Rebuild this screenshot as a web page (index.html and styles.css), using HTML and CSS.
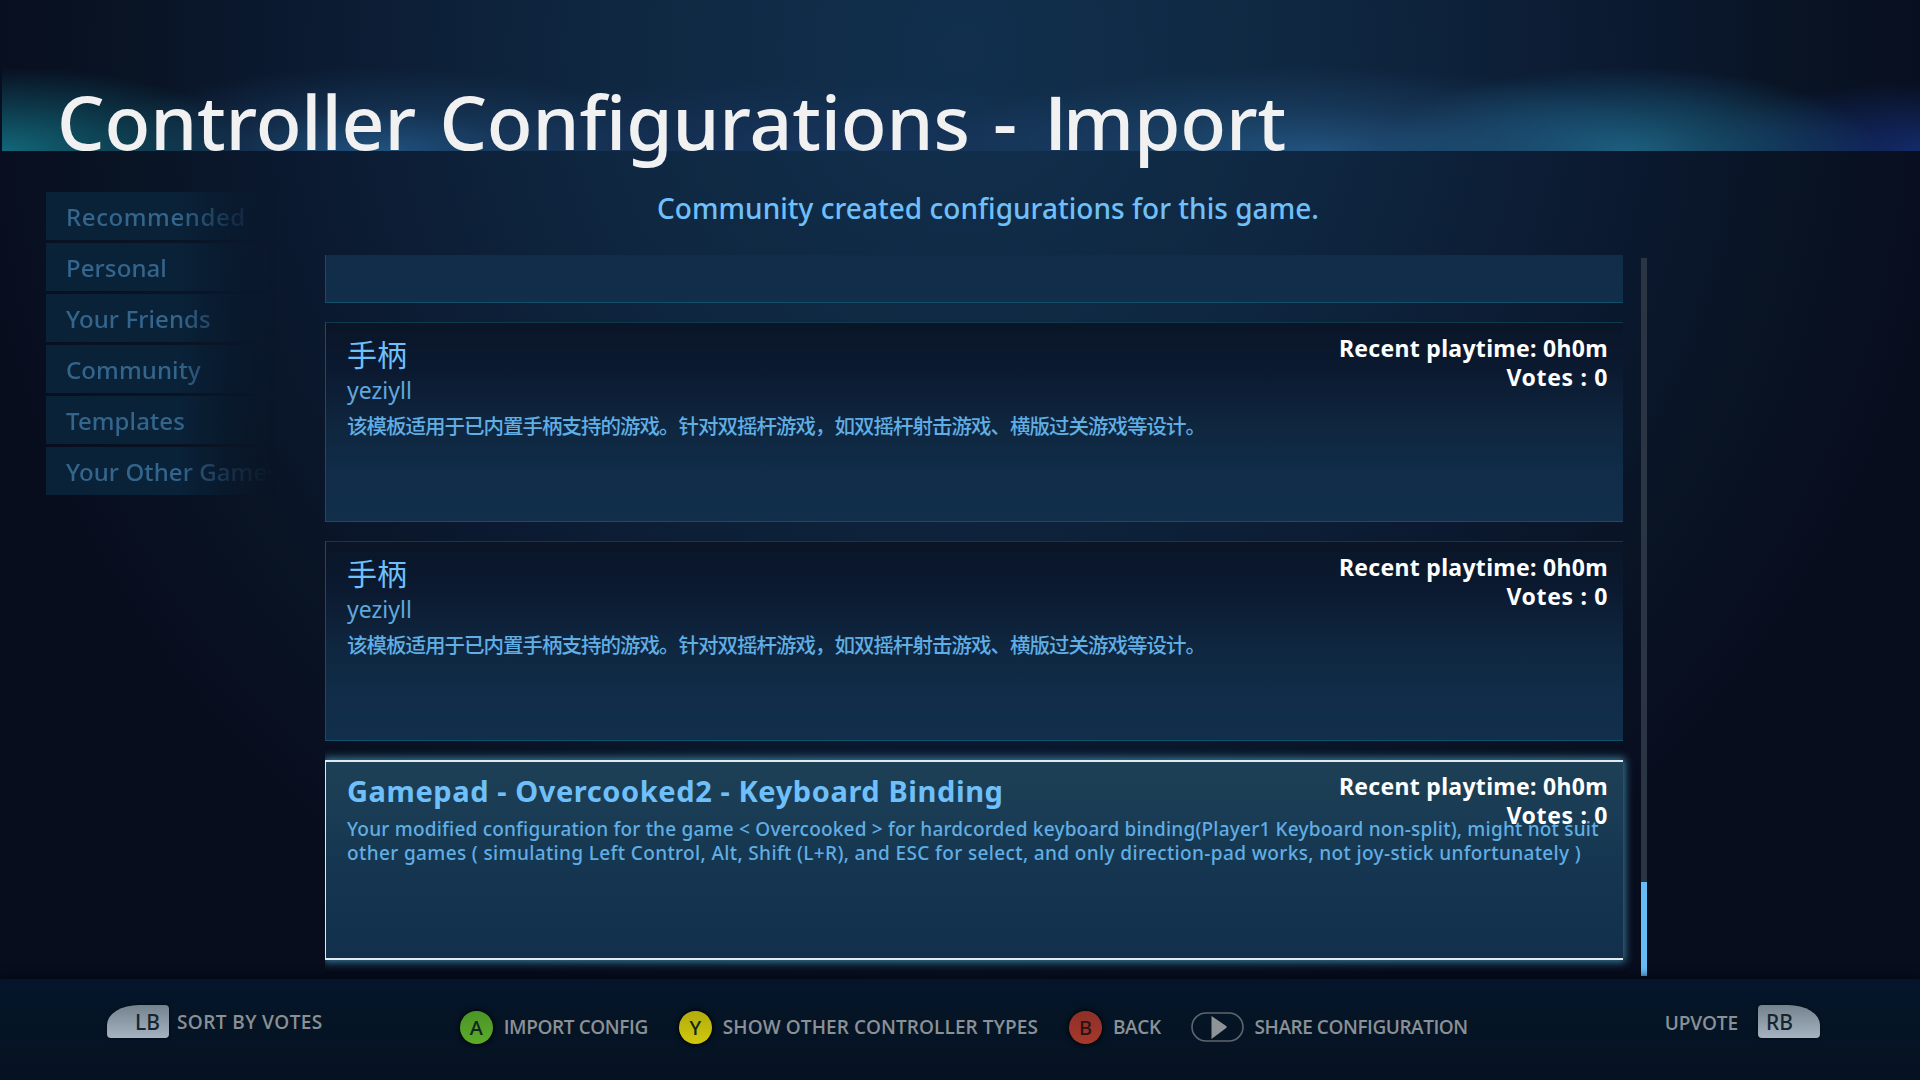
FILE: index.html
```html
<!DOCTYPE html>
<html lang="en">
<head>
  <meta charset="UTF-8">
  <meta name="viewport" content="width=device-width, initial-scale=1.0">
  <title>Controller Configurations - Import</title>
  <link rel="stylesheet" href="styles.css">
</head>
<body>

  <header class="header">
    <h1 class="page-title">Controller Configurations - <span class="plain">I</span>mport</h1>
  </header>

  <main class="main">
    <nav class="tabs">
      <a class="tab tab-wide">Recommended</a>
      <a class="tab">Personal</a>
      <a class="tab">Your Friends</a>
      <a class="tab">Community</a>
      <a class="tab">Templates</a>
      <a class="tab">Your Other Games</a>
    </nav>

    <section class="content">
      <p class="subtitle">Community created configurations for this game.</p>

      <div class="list-row">
        <div class="list">
          <div class="card"></div>

          <div class="card">
            <h2 class="card-title cjk">手柄</h2>
            <div class="author">yeziyll</div>
            <p class="desc cjk">该模板适用于已内置手柄支持的游戏。针对双摇杆游戏，如双摇杆射击游戏、横版过关游戏等设计。</p>
            <div class="stats">
              <div>Recent playtime: 0h0m</div>
              <div class="votes">Votes : 0</div>
            </div>
          </div>

          <div class="card">
            <h2 class="card-title cjk">手柄</h2>
            <div class="author">yeziyll</div>
            <p class="desc cjk">该模板适用于已内置手柄支持的游戏。针对双摇杆游戏，如双摇杆射击游戏、横版过关游戏等设计。</p>
            <div class="stats">
              <div>Recent playtime: 0h0m</div>
              <div class="votes">Votes : 0</div>
            </div>
          </div>

          <div class="card focused">
            <h2 class="card-title">Gamepad - Overcooked2 - Keyboard Binding</h2>
            <p class="desc">Your modified configuration for the game &lt; Overcooked &gt; for hardcorded keyboard binding(Player1 Keyboard non-split), might not suit<br><span class="loose">other games ( simulating Left Control, Alt, Shift (L+R), and ESC for select, and only direction-pad works, not joy-stick unfortunately )</span></p>
            <div class="stats">
              <div>Recent playtime: 0h0m</div>
              <div class="votes">Votes : 0</div>
            </div>
          </div>
        </div>

        <div class="scrollbar"><div class="thumb"></div></div>
      </div>
    </section>
  </main>

  <footer class="footer">
    <div class="hint hint-left">
      <span class="bumper lb">LB</span>
      <span class="label sort">SORT BY VOTES</span>
    </div>

    <div class="hints">
      <div class="hint"><span class="btn btn-a">A</span><span class="label import">IMPORT CONFIG</span></div>
      <div class="hint"><span class="btn btn-y">Y</span><span class="label types">SHOW OTHER CONTROLLER TYPES</span></div>
      <div class="hint"><span class="btn btn-b">B</span><span class="label back">BACK</span></div>
      <div class="hint">
        <svg class="start" width="53" height="31" viewBox="0 0 53 31">
          <rect x="1" y="1" width="51" height="28" rx="14" fill="none" stroke="#5d666e" stroke-width="1.6"/>
          <path d="M20.5 4 L34.5 13.5 Q37 15 34.5 16.5 L20.5 27 Z" fill="#8d9397"/>
        </svg>
        <span class="label share">SHARE CONFIGURATION</span>
      </div>
    </div>

    <div class="hint hint-right">
      <span class="label upvote">UPVOTE</span>
      <span class="bumper rb">RB</span>
    </div>
  </footer>

</body>
</html>
```

FILE: styles.css
```css
* {
  margin: 0;
  padding: 0;
  box-sizing: border-box;
}

body {
  width: 1920px;
  height: 1080px;
  overflow: hidden;
  display: flex;
  flex-direction: column;
  font-family: "Noto Sans", "Noto Sans CJK SC", sans-serif;
  color: #6fc0fa;
  background: radial-gradient(ellipse 1010px 1020px at 960px 50px, #11304d 0%, #0f2741 35%, #0b1a31 65%, #091425 82%, #080d1e 100%);
}

/* Header with the coloured light strip along its bottom edge */
.header {
  height: 151px;
  flex-shrink: 0;
  padding: 83px 0 0 55px;
  border-left: 2px solid transparent;
  background:
    radial-gradient(ellipse 250px 84px at 0 100%, rgba(18, 108, 126, 0.95), rgba(18, 108, 126, 0.42) 55%, transparent),
    radial-gradient(ellipse 290px 84px at 375px 100%, rgba(40, 104, 158, 0.7), rgba(38, 92, 140, 0.28) 50%, transparent),
    radial-gradient(ellipse 420px 70px at 800px 100%, rgba(32, 62, 118, 0.45), transparent),
    radial-gradient(ellipse 380px 84px at 1310px 100%, rgba(44, 106, 158, 0.65), rgba(40, 92, 140, 0.32) 50%, transparent),
    radial-gradient(ellipse 250px 84px at 1625px 100%, rgba(32, 118, 150, 0.75), rgba(28, 100, 136, 0.4) 60%, transparent),
    radial-gradient(ellipse 230px 70px at 1930px 100%, rgba(22, 48, 122, 0.85), transparent);
  background-clip: padding-box;
}

.page-title {
  font-size: 75px;
  line-height: 76px;
  font-weight: 500;
  letter-spacing: -0.15px;
  word-spacing: 4px;
  color: #f1f1f1;
  white-space: nowrap;
}

.plain {
  margin: 0 -4px 0 4px;
  font-family: "Open Sans", sans-serif;
  font-weight: 600;
}

.main {
  flex: 1;
  min-height: 0;
  display: flex;
}

/* Left navigation */
.tabs {
  width: 325px;
  padding: 41px 0 0 46px;
  display: flex;
  flex-direction: column;
  gap: 3px;
}

.tab {
  width: 229px;
  height: 48px;
  padding-left: 20px;
  overflow: hidden;
  white-space: nowrap;
  font-size: 24px;
  line-height: 50px;
  font-weight: 500;
  letter-spacing: 0.1px;
  color: #33658d;
  background: #0a2238;
  -webkit-mask-image: linear-gradient(90deg, #000 58%, rgba(0, 0, 0, 0.3) 82%, transparent);
  mask-image: linear-gradient(90deg, #000 58%, rgba(0, 0, 0, 0.3) 82%, transparent);
}

.tab-wide {
  letter-spacing: 0.6px;
}

.content {
  display: flex;
  flex-direction: column;
}

.subtitle {
  width: 1326px;
  height: 104px;
  padding-top: 37px;
  font-size: 28px;
  line-height: 40px;
  font-weight: 500;
  letter-spacing: 0.03px;
  text-align: center;
}

.list-row {
  height: 724px;
  display: flex;
  gap: 8px;
}

/* Scrolled to the end, so earlier cards run off the top */
.list {
  width: 1308px;
  padding-bottom: 19px;
  overflow: hidden;
  display: flex;
  flex-direction: column;
  justify-content: flex-end;
  gap: 19px;
}

.card {
  position: relative;
  width: 1298px;
  height: 200px;
  flex-shrink: 0;
  padding: 9px 0 0 21px;
  border: 1px solid #11506a;
  border-top-color: #0e3a4c;
  border-right: none;
  background: linear-gradient(180deg, #0a1527 0%, #0b1a31 25%, #0f263f 52%, #102c48 75%, #112e4a 100%);
}

.card.focused {
  padding: 11px 0 0 21px;
  border: 2px solid #dfe9ee;
  border-left-width: 1px;
  border-right: none;
  background: linear-gradient(180deg, #1e4056 0%, #1a3c54 25%, #14344f 60%, #12304c 100%);
  box-shadow: 0 0 8px 2px rgba(64, 142, 172, 0.85);
}

.card-title {
  margin-bottom: 1px;
  font-size: 29px;
  line-height: 36px;
  font-weight: 700;
  letter-spacing: 0.59px;
}

.card-title.cjk {
  margin-bottom: 2px;
  font-family: "Noto Sans CJK SC", sans-serif;
  font-size: 30px;
  line-height: 42px;
  font-weight: 400;
  letter-spacing: 0;
}

.author {
  font-size: 23px;
  line-height: 28px;
  color: #60a8dc;
}

.desc {
  margin-top: 8px;
  font-size: 19px;
  line-height: 24px;
  font-weight: 500;
  letter-spacing: 0.21px;
  white-space: nowrap;
  color: #60aee4;
}

.desc.cjk {
  margin-top: 9px;
  font-family: "Noto Sans CJK SC", sans-serif;
  font-size: 20.5px;
  font-weight: 500;
  letter-spacing: -1px;
}

.loose {
  letter-spacing: 0.37px;
}

.stats {
  position: absolute;
  top: 11px;
  right: 15px;
  font-size: 23px;
  line-height: 28.5px;
  font-weight: 700;
  letter-spacing: 0.3px;
  text-align: right;
  color: #fff;
}

.focused .stats {
  top: 10px;
}

.votes {
  letter-spacing: 0.65px;
}

.scrollbar {
  width: 6px;
  height: 718px;
  margin-top: 3px;
  display: flex;
  align-items: flex-end;
  background: #2b3442;
}

.thumb {
  width: 6px;
  height: 94px;
  background: #66bdf5;
}

/* Button hints */
.footer {
  height: 101px;
  flex-shrink: 0;
  padding: 0 100px 0 107px;
  display: flex;
  align-items: flex-start;
  background: linear-gradient(180deg, #04142b 0%, #051526 35%, #061222 100%);
  box-shadow: 0 -3px 8px rgba(3, 6, 14, 0.7);
}

.hint {
  display: flex;
  align-items: center;
  gap: 11px;
}

.hint-left {
  gap: 8px;
  margin-top: 27px;
}

.hint-right {
  gap: 21px;
  margin: 28px 0 0 auto;
}

.hints {
  display: flex;
  gap: 31px;
  margin: 32px 0 0 137px;
}

.label {
  font-family: "Open Sans", sans-serif;
  font-size: 19px;
  line-height: 32px;
  font-weight: 600;
  white-space: nowrap;
  color: #8a9095;
}

.sort {
  letter-spacing: 0.4px;
}

.hints .label {
  margin-top: -2px;
}

.import {
  letter-spacing: -0.4px;
}

.types {
  letter-spacing: 0.08px;
}

.back {
  margin-right: -1px;
  letter-spacing: -0.4px;
}

.share {
  letter-spacing: -0.45px;
}

.upvote {
  margin-right: -1px;
  letter-spacing: -0.1px;
}

.btn {
  width: 33px;
  height: 33px;
  border-radius: 50%;
  text-align: center;
  font-size: 20px;
  line-height: 33px;
  font-weight: 500;
  color: #10261c;
  box-shadow: 0 0 4px 2px rgba(0, 0, 0, 0.6);
}

.btn-a {
  background: linear-gradient(180deg, #4c9428, #5cac28);
}

.btn-y {
  background: linear-gradient(180deg, #b2ac10, #d0c80c);
}

.btn-b {
  color: #2a1218;
  background: linear-gradient(180deg, #8c3028, #a8382c);
}

.bumper {
  width: 62px;
  height: 33px;
  font-size: 21px;
  line-height: 34px;
  font-weight: 500;
  color: #15262e;
  background: linear-gradient(180deg, #74828e, #a6b4c2);
  box-shadow: 0 0 3px rgba(0, 0, 0, 0.7);
}

.lb {
  padding-right: 9px;
  margin-top: -1px;
  text-align: right;
  border-radius: 32px 4px 4px 4px / 20px 4px 4px 4px;
}

.rb {
  padding-left: 8px;
  margin-top: -3px;
  border-radius: 4px 32px 4px 4px / 4px 20px 4px 4px;
}
```
